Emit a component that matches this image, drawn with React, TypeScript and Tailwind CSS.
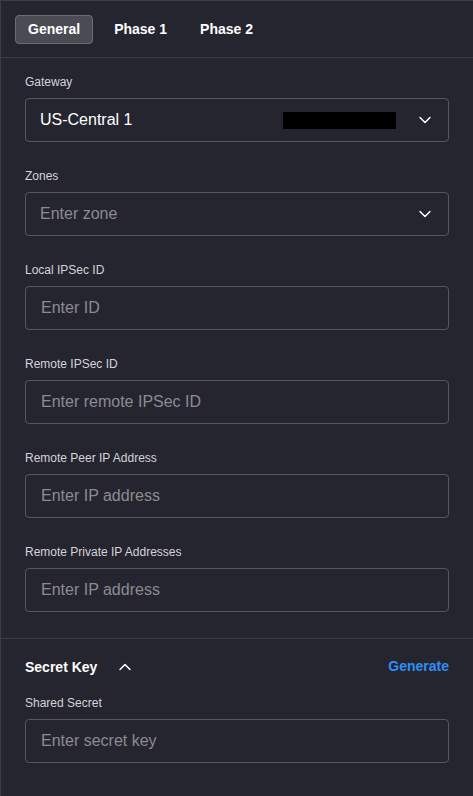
import { ChevronDown, ChevronUp } from "lucide-react";

const fields = [
  { label: "Local IPSec ID", placeholder: "Enter ID" },
  { label: "Remote IPSec ID", placeholder: "Enter remote IPSec ID" },
  { label: "Remote Peer IP Address", placeholder: "Enter IP address" },
  { label: "Remote Private IP Addresses", placeholder: "Enter IP address" },
];

function Label({ children }: { children: React.ReactNode }) {
  return (
    <div className="text-[12px] leading-[16px] text-[#d4d4d8] mb-[8px]">
      {children}
    </div>
  );
}

export default function App() {
  return (
    <div
      className="w-[473px] h-[796px] bg-[#25252f] border-l border-t border-[#3c3c46] text-white overflow-hidden"
      style={{ fontFamily: '"Liberation Sans", Arial, sans-serif' }}
    >
      {/* Tabs */}
      <div className="flex items-center gap-[9px] px-[14px] h-[57px] border-b border-[#3c3c46]">
        <button className="h-[29px] px-[12px] rounded-[4px] bg-[#4b4c53] border border-[#6c6d73] text-[14px] font-bold">
          General
        </button>
        <button className="h-[29px] px-[12px] text-[14px] font-bold">Phase 1</button>
        <button className="h-[29px] px-[12px] text-[14px] font-bold">Phase 2</button>
      </div>

      {/* Fields */}
      <div className="px-[24px] pt-[16px] pb-[26px] border-b border-[#3c3c46] flex flex-col gap-[26px]">
        <div>
          <Label>Gateway</Label>
          <div className="h-[44px] rounded-[4px] border border-[#56575e] flex items-center pl-[14px] pr-[13px]">
            <span className="text-[16px] text-white">US-Central 1</span>
            <div className="ml-auto w-[113px] h-[17px] bg-black mr-[19px]" />
            <ChevronDown className="w-[20px] h-[20px] text-white" strokeWidth={1.75} />
          </div>
        </div>
        <div>
          <Label>Zones</Label>
          <div className="h-[44px] rounded-[4px] border border-[#56575e] flex items-center pl-[14px] pr-[13px]">
            <span className="text-[16px] text-[#8b8b92]">Enter zone</span>
            <ChevronDown className="ml-auto w-[20px] h-[20px] text-white" strokeWidth={1.75} />
          </div>
        </div>
        {fields.map((f) => (
          <div key={f.label}>
            <Label>{f.label}</Label>
            <input
              className="w-full h-[44px] rounded-[4px] border border-[#56575e] bg-transparent px-[15px] text-[16px] placeholder:text-[#8b8b92] outline-none"
              placeholder={f.placeholder}
            />
          </div>
        ))}
      </div>

      {/* Secret key */}
      <div className="px-[24px] pt-[18px]">
        <div className="flex items-center h-[20px]">
          <span className="text-[14px] font-bold">Secret Key</span>
          <ChevronUp className="ml-[18px] w-[20px] h-[20px] text-white" strokeWidth={1.75} />
          <span className="ml-auto text-[14px] font-bold text-[#2e8ff5] -mt-[2px]">Generate</span>
        </div>
        <div className="mt-[18px]">
          <Label>Shared Secret</Label>
          <input
            className="w-full h-[44px] rounded-[4px] border border-[#56575e] bg-transparent px-[15px] text-[16px] placeholder:text-[#8b8b92] outline-none"
            placeholder="Enter secret key"
          />
        </div>
      </div>
    </div>
  );
}
